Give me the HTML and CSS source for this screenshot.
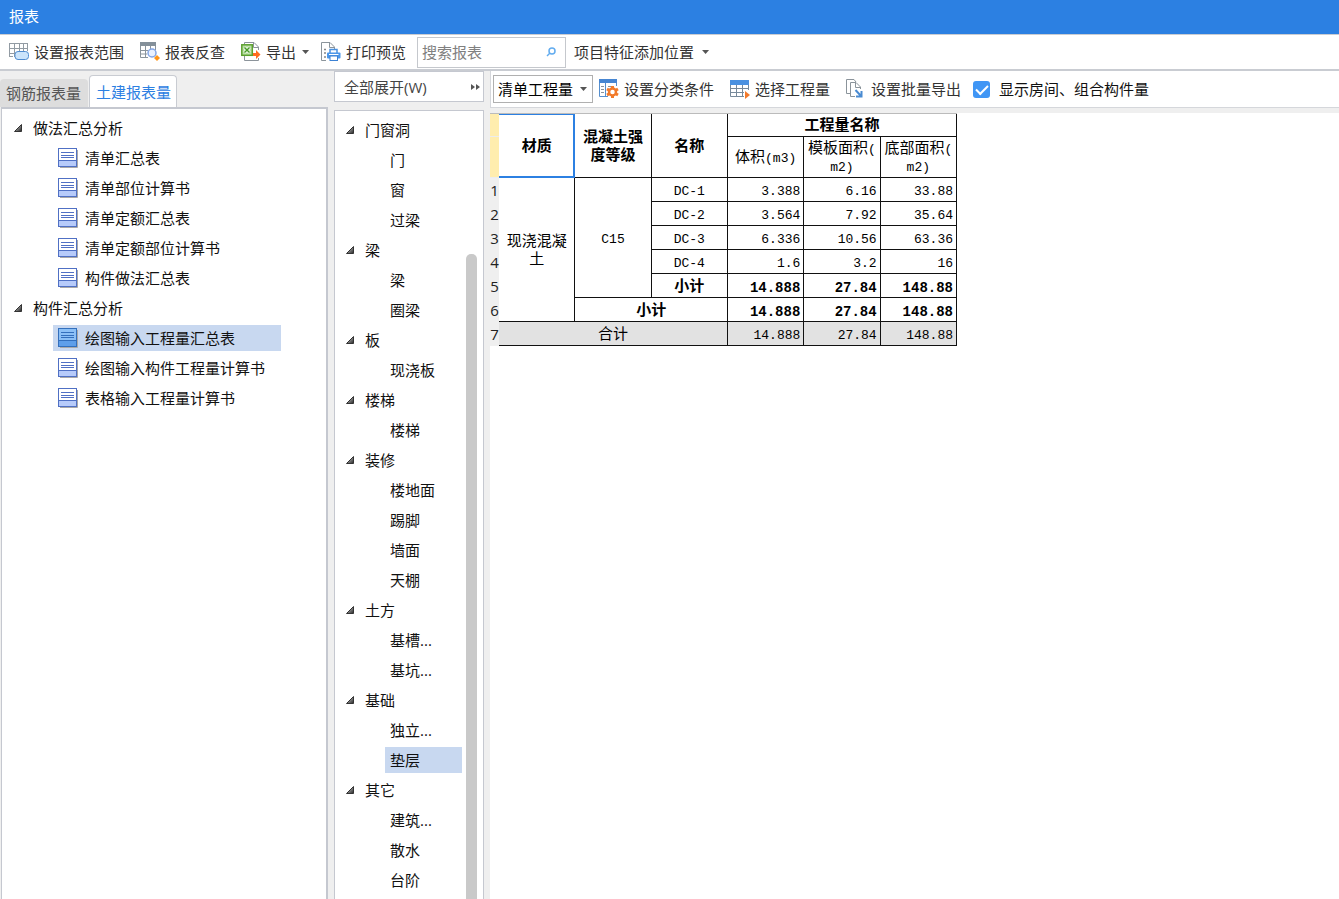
FILE: index.html
```html
<!DOCTYPE html>
<html lang="zh-CN">
<head>
<meta charset="utf-8">
<title>报表</title>
<link rel="stylesheet" href="styles.css">
</head>
<body>
<svg class="defs" width="0" height="0" aria-hidden="true">
  <defs>
    <linearGradient id="fold" x1="0" y1="0" x2="1" y2="1"><stop offset="0.4" stop-color="#999"/><stop offset="1" stop-color="#222"/></linearGradient>
    <symbol id="doc" viewBox="0 0 20 20">
      <path d="M2 19.5H19.5V2" fill="none" stroke="#a9a9a9"/>
      <rect class="page" x="0.5" y="0.5" width="18" height="18"/>
      <rect class="base" x="1" y="13" width="17" height="5"/>
      <path class="line" d="M0.5 12.5H18.5M3 4.5H16M3 7.5H16M3 9.5H16" fill="none"/>
    </symbol>
    <symbol id="tri" viewBox="0 0 8 8"><path d="M7.5 0.5V7.5H0.5Z" fill="url(#fold)" stroke="#333"/></symbol>
  </defs>
</svg>
<header class="title">报表</header>
<div class="bar main-bar">
  <button class="tool" type="button"><svg viewBox="0 0 20 20"><path d="M0 1.5H19M0 6.5H8M0 11.5H6M0.5 1V15M5.5 1V15M10.5 1V9M14.5 1V9M18.5 1V9M6 6.5H19M0 14.5H4" fill="none" stroke="#929ba3"/><rect x="6" y="9.5" width="13.5" height="8" rx="3" fill="#cbe4fb" stroke="#4f8cd0"/></svg>设置报表范围</button>
  <button class="tool" type="button"><svg viewBox="0 0 20 20"><path d="M0.5 1V15.5H8M5.5 4V15M10.5 4V7M15.5 1V8M0 8.5H8M0 12H7" fill="none" stroke="#8a949c"/><rect width="16" height="4" fill="#84909a"/><circle cx="12" cy="11" r="4" fill="#e9f1ff" stroke="#83a5e5" stroke-width="1.5"/><path d="M17 13L20 16L17 19L14 16Z" fill="#ff9518"/></svg>报表反查</button>
  <button class="tool" type="button"><svg viewBox="0 0 20 20"><path d="M3.5 2V0.5H13L17.5 5V8M3.5 14V18.5H17.5V16M12.5 0.5V5.5H17.5" fill="none" stroke="#8c949b"/><rect x="0.8" y="2.8" width="10.5" height="10.5" fill="#b9deA4" stroke="#5ba02f" stroke-width="1.5"/><path d="M3.5 5.5L8.5 10.5M8.5 5.5L3.5 10.5" fill="none" stroke="#fff" stroke-width="3"/><path d="M3.5 5.5L8.5 10.5M8.5 5.5L3.5 10.5" fill="none" stroke="#479b25" stroke-width="1.5"/><path d="M12 11H15V8L19.5 12.5L15 17V14H12Z" fill="#ff6c1e"/></svg>导出<i class="caret"></i></button>
  <button class="tool print" type="button"><svg viewBox="0 0 20 20"><path d="M5 18.5H0.5V0.5H9L13.5 5V7M8.5 0.5V5.5H13" fill="none" stroke="#8b949b"/><path d="M3 7.5H5M3 11H5M3 15H5" fill="none" stroke="#888" stroke-width="1.5"/><path d="M9 11V7.5H16V11" fill="none" stroke="#4a91df" stroke-width="1.5"/><rect x="6" y="10.500" width="13.500" height="6" rx="1" fill="#4a96ea"/><path d="M8 12.500H17.500" stroke="#fff"/><rect x="9" y="14" width="7.500" height="4.500" fill="#fff" stroke="#3c82d4"/></svg>打印预览</button>
  <div class="search">
    <input type="text" placeholder="搜索报表" aria-label="搜索报表">
    <svg viewBox="0 0 10 10"><circle cx="6" cy="4" r="3" fill="none" stroke="#62acef" stroke-width="1.5"/><path d="M4 6L1 9" stroke="#62acef" stroke-width="1.5"/></svg>
  </div>
  <button class="tool" type="button">项目特征添加位置<i class="caret far"></i></button>
</div>
<main class="work">
  <section class="reports">
    <div class="tabs" role="tablist">
      <button class="tab" role="tab" type="button">钢筋报表量</button>
      <button class="tab active" role="tab" aria-selected="true" type="button">土建报表量</button>
    </div>
    <nav class="panel report-panel">
      <div class="tree">
        <button class="group" type="button"><svg><use href="#tri"/></svg>做法汇总分析</button>
        <button class="leaf" type="button"><svg><use href="#doc"/></svg>清单汇总表</button>
        <button class="leaf" type="button"><svg><use href="#doc"/></svg>清单部位计算书</button>
        <button class="leaf" type="button"><svg><use href="#doc"/></svg>清单定额汇总表</button>
        <button class="leaf" type="button"><svg><use href="#doc"/></svg>清单定额部位计算书</button>
        <button class="leaf" type="button"><svg><use href="#doc"/></svg>构件做法汇总表</button>
        <button class="group" type="button"><svg><use href="#tri"/></svg>构件汇总分析</button>
        <button class="leaf selected" type="button"><svg><use href="#doc"/></svg>绘图输入工程量汇总表</button>
        <button class="leaf" type="button"><svg><use href="#doc"/></svg>绘图输入构件工程量计算书</button>
        <button class="leaf" type="button"><svg><use href="#doc"/></svg>表格输入工程量计算书</button>
      </div>
    </nav>
  </section>
  <section class="parts">
    <div class="parts-bar">
      <button class="expand" type="button">全部展开(W)</button>
      <button class="more" type="button" aria-label="更多"><svg viewBox="0 0 10 8"><path d="M0 1L4 4L0 7ZM5 1L9 4L5 7Z" fill="#555"/></svg></button>
    </div>
    <nav class="panel parts-panel">
      <div class="tree">
        <button class="group" type="button"><svg><use href="#tri"/></svg>门窗洞</button>
        <button class="leaf" type="button">门</button>
        <button class="leaf" type="button">窗</button>
        <button class="leaf" type="button">过梁</button>
        <button class="group" type="button"><svg><use href="#tri"/></svg>梁</button>
        <button class="leaf" type="button">梁</button>
        <button class="leaf" type="button">圈梁</button>
        <button class="group" type="button"><svg><use href="#tri"/></svg>板</button>
        <button class="leaf" type="button">现浇板</button>
        <button class="group" type="button"><svg><use href="#tri"/></svg>楼梯</button>
        <button class="leaf" type="button">楼梯</button>
        <button class="group" type="button"><svg><use href="#tri"/></svg>装修</button>
        <button class="leaf" type="button">楼地面</button>
        <button class="leaf" type="button">踢脚</button>
        <button class="leaf" type="button">墙面</button>
        <button class="leaf" type="button">天棚</button>
        <button class="group" type="button"><svg><use href="#tri"/></svg>土方</button>
        <button class="leaf" type="button">基槽...</button>
        <button class="leaf" type="button">基坑...</button>
        <button class="group" type="button"><svg><use href="#tri"/></svg>基础</button>
        <button class="leaf" type="button">独立...</button>
        <button class="leaf selected" type="button">垫层</button>
        <button class="group" type="button"><svg><use href="#tri"/></svg>其它</button>
        <button class="leaf" type="button">建筑...</button>
        <button class="leaf" type="button">散水</button>
        <button class="leaf" type="button">台阶</button>
      </div>
      <div class="track"><div class="thumb"></div></div>
    </nav>
  </section>
  <section class="view">
    <div class="bar view-bar">
      <div class="pick"><select aria-label="工程量类型"><option>清单工程量</option></select><i class="caret"></i></div>
      <button class="tool" type="button"><svg viewBox="0 0 20 20"><path d="M0.5 4V17.5H9M6.5 4V17M17.5 4V7" fill="none" stroke="#568fce"/><rect width="18" height="4" fill="#4786d2"/><path d="M2 7.5H5M2 10.5H5M2 13.5H5M9 7.5H12" stroke="#8b949b"/><path d="M13.5 7V19M8 10L19 16M8 16L19 10" stroke="#f27a2a" stroke-width="3"/><circle cx="13.5" cy="13" r="3.5" fill="#fff" stroke="#f27a2a" stroke-width="2.5"/></svg>设置分类条件</button>
      <button class="tool" type="button"><svg viewBox="0 0 20 20"><path d="M0.5 4V17.5H14M0 9.5H19M0 13.5H14M6.5 5V18M12.5 5V18M18.5 4V11" fill="none" stroke="#77899a"/><rect width="19" height="5" y="1" fill="#4b91e0"/><path d="M15 12L20 16L15 20Z" fill="#f37a2c"/></svg>选择工程量</button>
      <button class="tool" type="button"><svg viewBox="0 0 20 20"><path d="M4 14.5H0.5V0.5H8L10 3M9 17.5H4.5V3.5H10L14.5 8V10M9.500 4V8.500H14" fill="none" stroke="#8b949b"/><path d="M9.500 11L15 17M15.500 12V17.500H10" fill="none" stroke="#4a8bd2" stroke-width="2"/></svg>设置批量导出</button>
      <label class="check"><input type="checkbox" checked><span>显示房间、组合构件量</span></label>
    </div>
    <div class="sheet">
      <table>
        <colgroup><col class="num-col"><col><col><col><col><col><col></colgroup>
        <thead>
          <tr class="head-top"><td class="mark"></td><th rowspan="2" class="current">材质</th><th rowspan="2">混凝土强<br>度等级</th><th rowspan="2">名称</th><th colspan="3">工程量名称</th></tr>
          <tr class="head-sub"><td class="mark"></td><th>体积<span>(m3)</span></th><th>模板面积<span>(<br>m2)</span></th><th>底部面积<span>(<br>m2)</span></th></tr>
        </thead>
        <tbody>
          <tr><td class="num">1</td><td rowspan="6" class="cjk">现浇混凝<br>土</td><td rowspan="5">C15</td><td>DC-1</td><td class="val">3.388</td><td class="val">6.16</td><td class="val">33.88</td></tr>
          <tr><td class="num">2</td><td>DC-2</td><td class="val">3.564</td><td class="val">7.92</td><td class="val">35.64</td></tr>
          <tr><td class="num">3</td><td>DC-3</td><td class="val">6.336</td><td class="val">10.56</td><td class="val">63.36</td></tr>
          <tr><td class="num">4</td><td>DC-4</td><td class="val">1.6</td><td class="val">3.2</td><td class="val">16</td></tr>
          <tr class="sub"><td class="num">5</td><td class="cjk">小计</td><td class="val">14.888</td><td class="val">27.84</td><td class="val">148.88</td></tr>
          <tr class="sub"><td class="num">6</td><td colspan="2" class="cjk">小计</td><td class="val">14.888</td><td class="val">27.84</td><td class="val">148.88</td></tr>
          <tr class="total"><td class="num">7</td><td colspan="3" class="cjk">合计</td><td class="val">14.888</td><td class="val">27.84</td><td class="val">148.88</td></tr>
        </tbody>
      </table>
    </div>
  </section>
</main>
</body>
</html>
```
FILE: styles.css
```css
* { box-sizing: border-box; }
body {
  margin: 0;
  height: 100vh;
  display: flex;
  flex-direction: column;
  overflow: hidden;
  background: #efefef;
  color: #111;
  font: 15px/20px "Open Sans", "Noto Sans CJK SC", sans-serif;
}
button, input, select { font: inherit; color: inherit; }
button { border: 0; padding: 0; background: none; white-space: nowrap; text-align: left; }
.defs { position: absolute; }

.title { flex: none; height: 34px; padding: 6px 9px; background: #2c80e2; color: #fff; }

.bar { flex: none; display: flex; align-items: center; background: #fff; }
.main-bar { height: 37px; padding-left: 9px; border: solid #c9ccd2; border-width: 1px 0 2px; }
.tool { display: flex; align-items: center; gap: 5px; margin-right: 16px; color: #333; }
.tool svg { width: 20px; height: 20px; flex: none; }
.caret { width: 7px; height: 4px; margin-left: 1px; background: #555; clip-path: polygon(0 0, 100% 0, 50% 100%); }
.caret.far { margin-left: 3px; }
.main-bar .tool:nth-child(3) { margin-right: 12px; }
.main-bar .print { margin-right: 11px; }
.search { display: flex; align-items: center; width: 149px; height: 31px; margin-right: 8px; padding: 0 9px 0 4px; border: 1px solid #c5c8cd; background: #fff; }
.search input { flex: 1; min-width: 0; padding: 0; border: 0; outline: 0; }
.search input::placeholder { color: #808080; opacity: 1; }
.search svg { width: 10px; height: 10px; }

.work { flex: 1; min-height: 0; display: flex; gap: 6px; }
.reports { flex: none; width: 328px; display: flex; flex-direction: column; padding-top: 4px; }
.tabs { display: flex; align-items: flex-end; height: 32px; gap: 1px; }
.tab { height: 28px; width: 88px; padding: 0 6px; border-radius: 4px 4px 0 0; background: #ddd; color: #555; }
.tab.active { height: 32px; border: 1px solid #c9ccd2; border-bottom: 0; background: #fff; color: #2c80e2; }
.panel { flex: 1; min-height: 0; background: #fff; overflow: hidden; }
.report-panel { margin-left: 1px; border: 2px solid #c5c8d0; border-bottom: 0; border-left-width: 1px; padding-top: 4px; }
.tree { display: flex; flex-direction: column; }
.group { display: flex; align-items: center; height: 30px; gap: 11px; padding-left: 12px; }
.group svg { width: 8px; height: 8px; }
.leaf { display: flex; align-items: center; flex: none; height: 26px; margin: 2px 0; padding-left: 5px; --page: #fff; --base: #b7cbfa; --ink: #5070c4; }
.leaf.selected { background: #c8d8f0; --page: #8cc0f6; --base: #5f9fea; --ink: #336fbd; }
.report-panel .tree { width: fit-content; }
.report-panel .leaf { margin-left: 51px; padding-right: 16px; gap: 7px; }
.leaf svg { width: 20px; height: 20px; }
.page { fill: var(--page); stroke: var(--ink); }
.base { fill: var(--base); }
.line { stroke: var(--ink); }

.parts { flex: none; width: 150px; display: flex; flex-direction: column; gap: 8px; }
.parts-bar { display: flex; align-items: center; justify-content: space-between; height: 31px; padding: 0 2px 0 9px; border: 1px solid #c5c8d0; background: #fff; color: #444; }
.more { display: flex; }
.more svg { width: 10px; height: 8px; }
.parts-panel { display: flex; justify-content: space-between; border: 1px solid #c5c8d0; border-bottom: 0; padding: 4px 6px 0 0; }
.parts-panel .tree { width: 127px; }
.parts-panel .group { flex: none; padding-left: 11px; }
.parts-panel .leaf { margin-left: 50px; }
.track { width: 11px; padding-top: 139px; display: flex; }
.thumb { flex: 1; border-radius: 5px 5px 0 0; background: #c9c9c9; }

.view { flex: 1; min-width: 0; display: flex; flex-direction: column; }
.view-bar { height: 37px; padding-left: 2px; border: solid #d5d7db; border-width: 0 0 1px 1px; }
.pick { position: relative; display: flex; width: 100px; height: 28px; margin-right: 6px; }
.pick select { appearance: none; width: 100%; padding: 0 4px; border: 1px solid #b0b0b0; border-radius: 0; background: #fff; color: #000; }
.pick .caret { position: absolute; right: 6px; top: 12px; }
.check { display: flex; align-items: center; gap: 9px; margin-left: -4px; white-space: nowrap; }
.check input { appearance: none; display: grid; place-items: center; width: 17px; height: 17px; margin: 0; border-radius: 3px; background: #4096f5; }
.check input::before { content: ""; width: 10px; height: 5px; border: solid #fff; border-width: 0 0 2px 2px; rotate: -45deg; translate: 0 -1px; }

.sheet { flex: 1; margin-top: 5px; background: #fff; overflow: hidden; }
table { width: 467px; table-layout: fixed; border-collapse: separate; border-spacing: 0; border-top: 1px solid #bbb; font-family: "Liberation Mono", "Noto Sans CJK SC", monospace; font-size: 13px; line-height: 16px; color: #000; }
.num-col { width: 9px; }
th, td { height: 24px; padding: 4px 0 0; border: solid #111; border-width: 0 1px 1px 0; text-align: center; vertical-align: middle; }
.head-top th { font-size: 15px; line-height: 18px; }
.head-top .mark, .head-top th { height: 23px; }
.head-top .mark, .head-sub .mark { border: 0; border-bottom: 1px solid #ececec; background: #ffedae; }
.head-sub th { height: 41px; font-size: 15px; line-height: 18px; font-weight: 400; white-space: nowrap; }
.head-sub span { font-size: 13px; }
.head-top .current { box-shadow: inset 0 1px #2c80e2, inset -1px -1px #2c80e2; border-color: #2c80e2; }
.cjk { font-size: 15px; line-height: 18px; }
.val { padding-right: 3px; text-align: right; }
.num { padding: 0; border: 0; background: #efefef; font: 15px/20px "Open Sans", sans-serif; color: #222; }
.sub td:not(.num) { font-weight: 700; }
.sub .val { font-size: 14px; }
.total td:not(.num) { background: #e2e2e2; }
```
